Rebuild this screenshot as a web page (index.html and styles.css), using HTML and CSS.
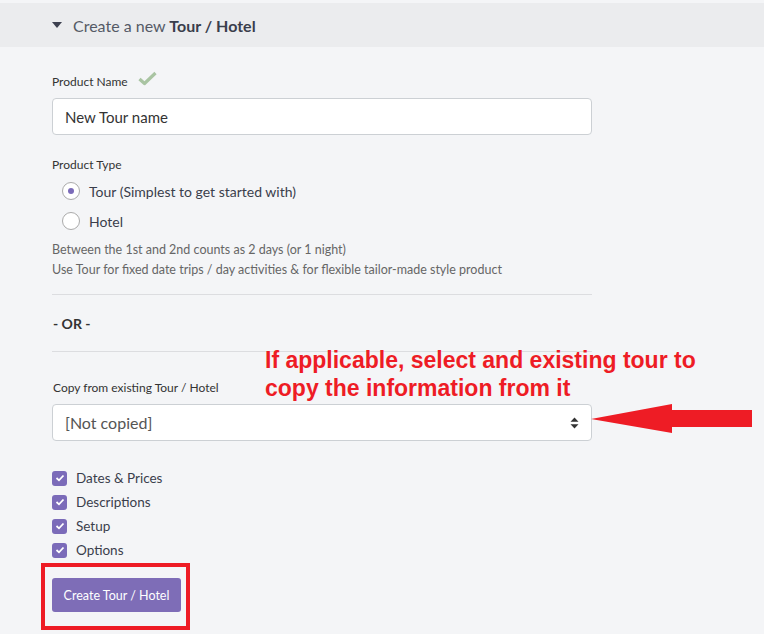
FILE: index.html
```html
<!DOCTYPE html>
<html>
<head>
<meta charset="utf-8">
<link rel="stylesheet" href="styles.css">
</head>
<body>
<div class="page">
  <div class="header">
    <span class="caret"></span>
    <span class="title">Create a new <b>Tour / Hotel</b></span>
  </div>
  <div class="content">
    <div class="label-row">
      <span class="label">Product Name</span>
      <svg class="check" width="19" height="15" viewBox="0 0 19 15"><path d="M1.5 8 L6.5 12.5 L17.5 2" fill="none" stroke="#a9c4a2" stroke-width="3.2" stroke-linejoin="round"/></svg>
    </div>
    <div class="input">New Tour name</div>

    <div class="label type-label">Product Type</div>
    <div class="radios">
      <div class="radio-row"><span class="radio checked"></span><span>Tour (Simplest to get started with)</span></div>
      <div class="radio-row"><span class="radio"></span><span>Hotel</span></div>
    </div>
    <div class="help">
      <div>Between the 1st and 2nd counts as 2 days (or 1 night)</div>
      <div>Use Tour for fixed date trips / day activities &amp; for flexible tailor-made style product</div>
    </div>
    <hr class="rule first">
    <div class="or">- OR -</div>
    <hr class="rule">
    <div class="label copy-label">Copy from existing Tour / Hotel</div>
    <div class="select">
      <span>[Not copied]</span>
      <svg width="9" height="12" viewBox="0 0 9 12"><path d="M4.5 0.5 L8.5 4.8 L0.5 4.8 Z M0.5 7.2 L8.5 7.2 L4.5 11.5 Z" fill="#333"/></svg>
    </div>
    <div class="checks">
      <div class="check-row"><span class="box"><svg width="10" height="8" viewBox="0 0 10 8"><path d="M1.5 4 L4 6.3 L8.5 1.5" fill="none" stroke="#fff" stroke-width="1.8"/></svg></span>Dates &amp; Prices</div>
      <div class="check-row"><span class="box"><svg width="10" height="8" viewBox="0 0 10 8"><path d="M1.5 4 L4 6.3 L8.5 1.5" fill="none" stroke="#fff" stroke-width="1.8"/></svg></span>Descriptions</div>
      <div class="check-row"><span class="box"><svg width="10" height="8" viewBox="0 0 10 8"><path d="M1.5 4 L4 6.3 L8.5 1.5" fill="none" stroke="#fff" stroke-width="1.8"/></svg></span>Setup</div>
      <div class="check-row"><span class="box"><svg width="10" height="8" viewBox="0 0 10 8"><path d="M1.5 4 L4 6.3 L8.5 1.5" fill="none" stroke="#fff" stroke-width="1.8"/></svg></span>Options</div>
    </div>
    <div class="btn-wrap">
      <button class="btn">Create Tour / Hotel</button>
    </div>
  </div>
  <div class="note">If applicable, select and existing tour to<br>copy the information from it</div>
  <svg class="arrow" width="164" height="32" viewBox="0 0 164 32"><path d="M1 16 L82 1 L82 7 L162 7 L162 24 L82 24 L82 30 Z" fill="#ee1c25"/></svg>
</div>
</body>
</html>
```
FILE: styles.css
```css
* { box-sizing: border-box; }
html, body { margin: 0; padding: 0; }
body {
  background: #f4f5f7;
  font-family: Lato, "Open Sans", sans-serif;
  color: #333;
  width: 764px;
  height: 634px;
  overflow: hidden;
}
.page { position: relative; padding-top: 3px; height: 634px; }
.header {
  height: 44px;
  background: #ebecee;
  display: flex;
  align-items: center;
  padding-left: 52px;
}
.caret {
  width: 0; height: 0;
  border-left: 5px solid transparent;
  border-right: 5px solid transparent;
  border-top: 6px solid #3d4150;
  margin-right: 11px;
}
.title { font-size: 16px; color: #555a66; }
.title b { color: #3a3e4c; font-weight: 700; }
.content { padding: 0 52px; width: 644px; }
.label-row { display: flex; align-items: center; margin-top: 26px; height: 16px; }
.label { font-size: 12px; color: #333; }
.check { margin-left: 10px; margin-top: -6px; }
.input {
  margin-top: 9px;
  height: 37px;
  background: #fff;
  border: 1px solid #ccd0d4;
  border-radius: 4px;
  padding-left: 12px;
  display: flex; align-items: center;
  font-size: 15px;
  color: #333;
}
.type-label { margin-top: 22px; }
.radios { margin-top: 4px; padding-left: 10px; }
.radio-row { display: flex; align-items: center; height: 30px; font-size: 14px; color: #3a3e4c; }
.radio {
  width: 18px; height: 18px; border-radius: 50%;
  border: 1px solid #aaa;
  background: #fff;
  margin-right: 9px;
  display: flex; align-items: center; justify-content: center;
}
.radio.checked::after { content: ""; width: 6px; height: 6px; border-radius: 50%; background: #7b6bb9; }
.help { margin-top: 4px; font-size: 12.5px; color: #666; line-height: 20px; }
.rule { border: 0; border-top: 1px solid #dcdde0; margin: 0; width: 540px; }
.rule.first { margin-top: 14px; }
.or { font-weight: 700; font-size: 14px; color: #333; padding-left: 1px; height: 56px; display: flex; align-items: center; }
.copy-label { margin-top: 28px; padding-left: 1px; }
.select {
  margin-top: 9px;
  height: 37px;
  background: #fff;
  border: 1px solid #ccd0d4;
  border-radius: 4px;
  padding: 0 12px;
  display: flex; align-items: center; justify-content: space-between;
  font-size: 16px; color: #555;
}
.checks { margin-top: 25px; }
.check-row { display: flex; align-items: center; height: 24px; font-size: 13.5px; color: #3a3e4c; }
.box {
  width: 15px; height: 15px; border-radius: 3px; background: #7b6bb9;
  display: flex; align-items: center; justify-content: center;
  margin-right: 9px;
}
.btn-wrap { margin-top: 1px; margin-left: -11px; width: 149px; height: 67px; border: 4px solid #ee1c25; padding: 11px 0 0 7px; }
.btn {
  width: 129px; height: 34px;
  background: #7e6db7;
  border: 0; border-radius: 3px;
  color: #fff;
  font-family: Lato, sans-serif;
  font-size: 12.5px;
  padding: 0;
}
.note {
  position: absolute;
  left: 265px; top: 346px;
  font-family: "Liberation Sans", Arial, sans-serif;
  font-weight: 700;
  font-size: 23px;
  line-height: 28px;
  color: #ee1c25;
  transform: scaleX(1.0);
  transform-origin: left top;
  white-space: nowrap;
}
.arrow { position: absolute; left: 590px; top: 403px; }
```
